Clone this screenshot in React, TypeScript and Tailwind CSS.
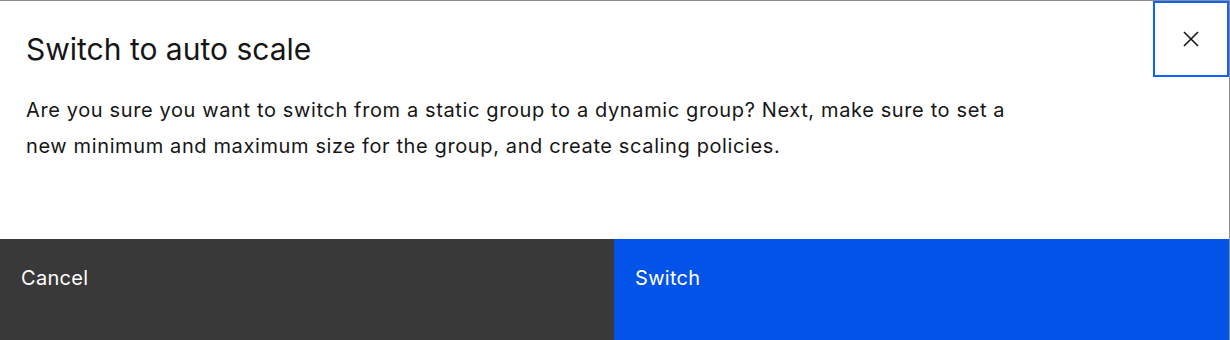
import React from "react";

const CloseIcon: React.FC = () => (
  <svg width="16" height="16" viewBox="0 0 16 16" fill="none" stroke="#161616" strokeWidth="1.6">
    <path d="M1 1L15 15M15 1L1 15" />
  </svg>
);

const App: React.FC = () => {
  return (
    <div
      className="w-[1230px] h-[340px] bg-white overflow-hidden"
      style={{ fontFamily: "Inter, 'Noto Sans', sans-serif" }}
    >
      <div className="w-[1230px] h-[340px] flex flex-col border-t border-r border-[#8d8d8d]">
        <div className="flex justify-between items-start">
          <div className="pl-[26px] pt-[30px]">
            <h2 className="text-[30px] leading-[36px] text-[#161616] font-normal">Switch to auto scale</h2>
            <p className="mt-[25px] text-[20px] leading-[36px] tracking-[0.62px] text-[#161616] w-[1060px]">
              Are you sure you want to switch from a static group to a dynamic group? Next, make sure to set a
              <br />
              new minimum and maximum size for the group, and create scaling policies.
            </p>
          </div>
          <button className="w-[76px] h-[76px] border-2 border-[#0f62fe] flex items-center justify-center shrink-0">
            <CloseIcon />
          </button>
        </div>
        <div className="mt-auto h-[101px] flex">
          <button className="w-[614px] h-full bg-[#393939] text-white text-left pl-[21px] pt-[25px] flex items-start text-[20px] leading-[28px] tracking-[0.3px]">
            Cancel
          </button>
          <button className="flex-1 h-full bg-[#0353e9] text-white text-left pl-[21px] pt-[25px] flex items-start text-[20px] leading-[28px] tracking-[0.3px]">
            Switch
          </button>
        </div>
      </div>
    </div>
  );
};

export default App;
